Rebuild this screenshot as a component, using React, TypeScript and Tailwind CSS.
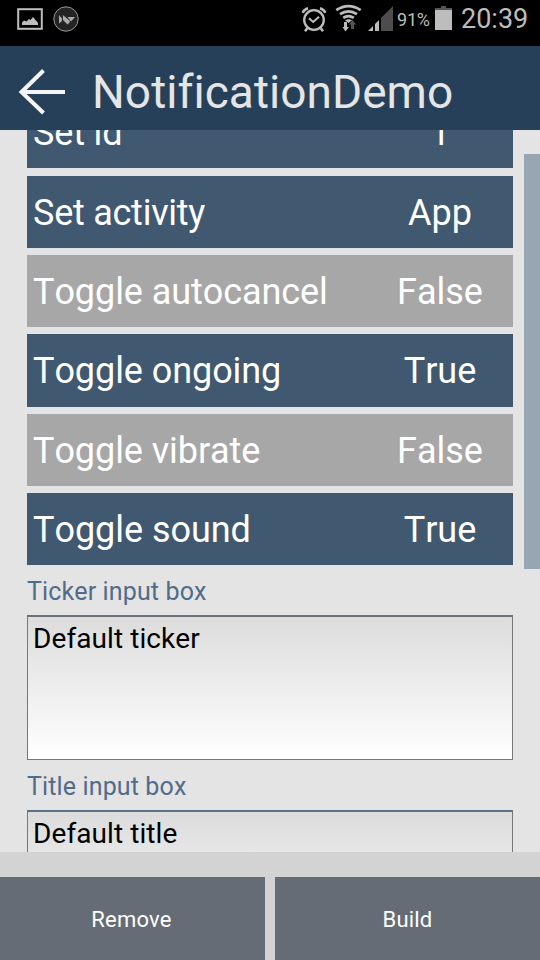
import React from 'react';

type Option = { label: string; value: string; on: boolean; box: string; spacing: string };

const options: Option[] = [
  { label: 'Set id', value: '1', on: true, box: 'h-[72px] mb-[8px] pt-[2px]', spacing: 'tracking-[-0.15px]' },
  { label: 'Set activity', value: 'App', on: true, box: 'h-[72px] mb-[7px] pt-[2px]', spacing: 'tracking-[-0.25px]' },
  { label: 'Toggle autocancel', value: 'False', on: false, box: 'h-[72px] mb-[7px] pt-[2px]', spacing: 'tracking-[-0.07px]' },
  { label: 'Toggle ongoing', value: 'True', on: true, box: 'h-[73px] mb-[7px]', spacing: 'tracking-[-0.07px]' },
  { label: 'Toggle vibrate', value: 'False', on: false, box: 'h-[72px] mb-[7px] pt-[2px]', spacing: 'tracking-[-0.07px]' },
  { label: 'Toggle sound', value: 'True', on: true, box: 'h-[72px] pt-[2px]', spacing: 'tracking-[-0.04px]' },
];

function StatusBar() {
  return (
    <div className="flex h-[46px] shrink-0 items-start bg-black text-[#bdbdbd]">
      <svg className="h-[46px] w-[90px]" viewBox="0 0 90 46">
        <rect x="18.2" y="9.2" width="23.6" height="19.6" fill="none" stroke="#bdbdbd" strokeWidth="2" />
        <path d="M22 25V22.5L24 20.5L26.5 21.5L29 19L30.5 20L33 17L35.5 20L36.5 21L38 23V25Z" fill="#bdbdbd" />
        <circle cx="66" cy="19" r="12.2" fill="#242424" stroke="#999" strokeWidth="1" />
        <path d="M59 15L62 18.5V21L59 23.5ZM62.8 15L69 20L70 22L67.5 24.5L63 20ZM67.5 17H75L71 21.5Z" fill="#aaa" />
      </svg>
      <div className="flex-1" />
      <svg className="h-[46px] w-[97px]" viewBox="300 0 97 46" fill="none" stroke="#bdbdbd">
        <circle cx="314" cy="20" r="9.8" strokeWidth="2.3" />
        <path d="M309 18.2L313.2 22L319 16.7" strokeWidth="2" />
        <path d="M302.6 12.8Q304.3 9.3 308 8.3M320 8.3Q323.7 9.3 325.4 12.8" strokeWidth="2.6" />
        <path d="M307.2 28.3L305 31.3M320.8 28.3L323 31.3" strokeWidth="2.5" />
        <path d="M336.3 10.2Q348.5 2.2 360.7 10.2M340 14.2Q348.5 8.6 357 14.2M343.2 17.9Q348.5 14.3 353.8 17.9" strokeWidth="2.7" />
        <path d="M345 20.2Q348.5 18.1 352 20.2L348.5 23Z" fill="#bdbdbd" stroke="none" />
        <path d="M344 22H347V27H349L345.5 31.5L342.5 27H344Z" fill="#bdbdbd" stroke="none" />
        <path d="M352.5 20L356.2 24.5H354V29H351V24.5H349Z" fill="#555" stroke="none" />
        <path d="M368 31L373 26V31ZM375 24L379 20V31H375Z" fill="#bdbdbd" stroke="none" />
        <path d="M381 18L393 6V31H381Z" fill="#4d4d4d" stroke="none" />
      </svg>
      <span className="mt-[9px] w-[38px] whitespace-nowrap text-[18px] leading-[22px] tracking-[-0.2px]">91%</span>
      <svg className="h-[46px] w-[17px]" viewBox="0 0 17 46">
        <path d="M6 6H11V8H17V10H0V8H6Z" fill="#555" />
        <path d="M0 10H17V30H0Z" fill="#bdbdbd" />
      </svg>
      <span className="ml-[9px] mt-[3px] w-[79px] whitespace-nowrap text-[27px] leading-[32px]">20:39</span>
    </div>
  );
}

function OptionRow({ label, value, on, box, spacing }: Option) {
  return (
    <div className={`flex shrink-0 items-center text-[36px] leading-[42px] text-white [font-kerning:none] ${box} ${on ? 'bg-[#405971]' : 'bg-[#a7a7a7]'}`}>
      <span className={`flex-1 whitespace-nowrap pl-[6px] ${spacing}`}>{label}</span>
      <span className="w-[145px] pr-px text-center">{value}</span>
    </div>
  );
}

function InputBox({ label, value, edge }: { label: string; value: string; edge: string }) {
  return (
    <div className="shrink-0 [font-kerning:none]">
      <div className="h-[50px] whitespace-nowrap pt-[12px] text-[25px] leading-[29px] tracking-[0.13px] text-[#506c89]">{label}</div>
      <div className={`h-[145px] border border-t-2 border-[#77777a] bg-linear-to-b from-[#dcdcdc] to-white pl-[5px] pt-[5px] text-[28px] leading-[33px] tracking-[0.08px] text-black ${edge}`}>
        {value}
      </div>
    </div>
  );
}

export default function App() {
  return (
    <div className="flex h-[960px] w-[540px] flex-col overflow-hidden bg-[#e4e4e4] font-['Roboto',sans-serif]">
      <StatusBar />
      <header className="flex h-[84px] shrink-0 items-center bg-[#274059] text-[#e5e5e5]">
        <svg className="h-[84px] w-[92px] shrink-0" viewBox="0 46 92 84" fill="none" stroke="#f5f5f5" strokeWidth="4">
          <path d="M65 92H22M43.5 70.5L21.5 92L43.5 113" />
        </svg>
        <h1 className="mt-[8px] whitespace-nowrap text-[46px] leading-[56px] tracking-[0.04px] [font-kerning:none] [font-variant-ligatures:none]">NotificationDemo</h1>
      </header>
      <main className="flex h-[722px] shrink-0 overflow-hidden">
        <div className="-mt-[34px] ml-[27px] flex w-[486px] flex-col">
          {options.map((option) => (
            <OptionRow key={option.label} {...option} />
          ))}
          <InputBox label="Ticker input box" value="Default ticker" edge="border-t-[#69727c]" />
          <InputBox label="Title input box" value="Default title" edge="border-t-[#5c7087]" />
        </div>
        <div className="ml-[11px] mt-[24px] h-[415px] w-[16px] bg-[#98a5b3]" />
      </main>
      <footer className="grid flex-1 grid-cols-2 gap-[10px] bg-[#d3d3d3] pt-[25px] text-[22px] leading-[26px] tracking-[0.2px] text-white">
        <button className="bg-[#656c76] pr-[2px] pt-[2px]">Remove</button>
        <button className="bg-[#656c76] pt-[2px]">Build</button>
      </footer>
    </div>
  );
}
